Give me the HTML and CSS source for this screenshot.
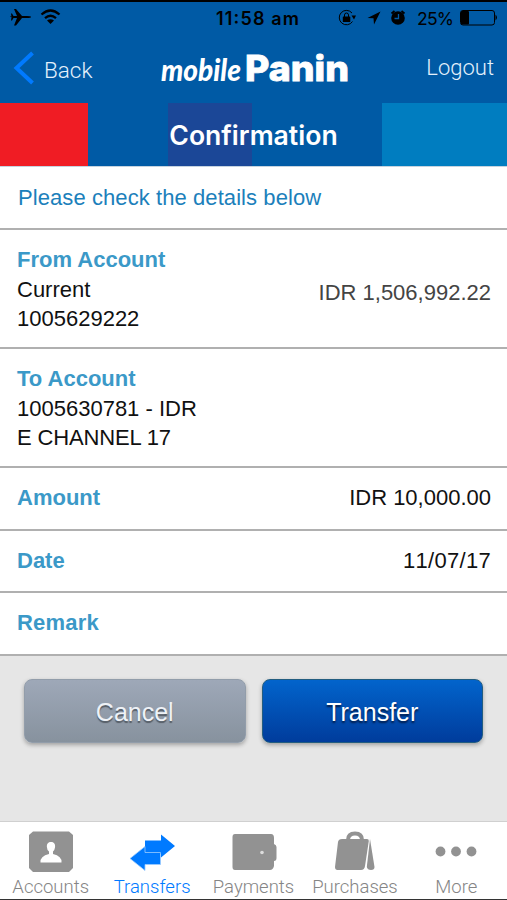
FILE: index.html
```html
<!DOCTYPE html>
<html lang="en">
<head>
  <meta charset="UTF-8">
  <meta name="viewport" content="width=device-width, initial-scale=1.0">
  <title>Mobile Panin - Confirmation</title>
  <link rel="stylesheet" href="styles.css">
</head>
<body>
  <div class="app">
    <header class="header">
      <!-- Status bar -->
      <svg class="status" width="507" height="32" viewBox="0 0 507 32">
        <path d="M10 17 Q10 16 12 16 H17 L14 9 H16 L22 16 H27 Q31 16 31 17 Q31 18 27 18 H22 L16 25.500 H14 L17 18 H13.500 L12 20.500 H11 L11.500 17 L11 13.500 H12 L13.500 16 Z"/>
        <g class="wifi">
          <path d="M41.500 14.500 Q50.500 6.500 59.500 14.500"/>
          <path d="M45 18.200 Q50.500 13.200 56 18.200"/>
        </g>
        <path d="M47 20.500 Q50.500 17.800 54 20.500 L50.500 24 Z"/>
        <text class="time" x="216" y="25" textLength="83">11:58 am</text>
        <path class="thin" d="M352 13 A7.200 7.200 0 1 0 352.500 21.500"/>
        <path d="M351.500 15.500 h4.500 l-2 4 z"/>
        <rect x="342.800" y="16.500" width="7.500" height="5.500" rx=".6"/>
        <path class="thin" d="M344.500 17 v-2 a2 2 0 0 1 4 0 v2"/>
        <path d="M367.500 18 L380.500 11.500 L374 24.500 L373.500 18.200 Z"/>
        <circle cx="398" cy="18" r="6.800"/>
        <path class="bell" d="M391.500 13.500 l3-2.500 M401.500 11 l3 2.500"/>
        <path class="hands" d="M398.500 14 v4.500 h-4"/>
        <text class="percent" x="417" y="25" textLength="37">25%</text>
        <rect class="thin" x="460.500" y="10.500" width="34" height="14.500" rx="2.500"/>
        <rect x="461" y="11" width="8" height="13.500" rx="1"/>
        <path d="M495.500 14.500 q3 3 0 6 z"/>
      </svg>
      <nav class="nav">
        <a class="back">
          <svg width="22" height="34" viewBox="0 0 22 34"><path d="M19.500 2 L3.500 17 L19.500 32"/></svg>
          <span>Back</span>
        </a>
        <svg class="logo" width="196" height="40" viewBox="0 0 196 40">
          <text class="mobile" x="3" y="30" textLength="80" lengthAdjust="spacingAndGlyphs">mobile</text>
          <text class="panin" x="87" y="30" textLength="104" lengthAdjust="spacingAndGlyphs">Panin</text>
        </svg>
        <a class="logout">Logout</a>
      </nav>
    </header>

    <h1 class="title">Confirmation</h1>

    <main>
      <p class="notice">Please check the details below</p>
      <section class="row account">
        <div>
          <h2>From Account</h2>
          <p>Current</p>
          <p>1005629222</p>
        </div>
        <span class="balance">IDR 1,506,992.22</span>
      </section>
      <section class="row account">
        <div>
          <h2>To Account</h2>
          <p>1005630781 - IDR</p>
          <p class="name">E CHANNEL 17</p>
        </div>
      </section>
      <section class="row"><h2>Amount</h2><span>IDR 10,000.00</span></section>
      <section class="row"><h2>Date</h2><span class="date">11/07/17</span></section>
      <section class="row"><h2 class="remark">Remark</h2></section>
    </main>

    <div class="actions">
      <button class="btn cancel">Cancel</button>
      <button class="btn transfer">Transfer</button>
    </div>

    <nav class="tabs">
      <a class="tab">
        <svg width="50" height="46" viewBox="0 0 50 46">
          <path d="M7 2.500 H43 L47 6 V39 L43 43 H7 L3 39 V6 Z"/>
          <path class="white" d="M25 13 c3.500 0 4.500 2.500 4 5.500 q-.3 2.500-2 4 v2.500 q9 2 8.500 8.500 H14.500 q-.5-6.500 8.500-8.500 v-2.500 q-2-1.500-2-4 c-.5-3 .5-5.500 4-5.500 z"/>
        </svg>
        <span>Accounts</span>
      </a>
      <a class="tab active">
        <svg width="50" height="46" viewBox="0 0 50 46">
          <path d="M18 11.500 H34 V5.500 L48 17 L34 28.500 V25 H18 Z"/>
          <path class="edge" d="M3 29.500 L18 17.500 V23.500 H33.500 V35.500 H18 V41.500 Z"/>
        </svg>
        <span>Transfers</span>
      </a>
      <a class="tab">
        <svg width="50" height="46" viewBox="0 0 50 46">
          <path d="M6 5 H42 Q45 5 45 9 V15 Q47.500 16 47.500 18 V29 Q47.500 32 45 32 V37 Q44 41 41 41 H6 Q3.500 41 3.500 38 V8 Q3.500 5 6 5 Z"/>
          <circle class="dot" cx="33" cy="23.500" r="1.800"/>
        </svg>
        <span>Payments</span>
      </a>
      <a class="tab">
        <svg width="50" height="46" viewBox="0 0 50 46">
          <path class="handle" d="M18 11 Q18 4.500 25 4.500 Q32 4.500 32 11"/>
          <path d="M12 10 H37 Q39 10 38.800 12 L35 37 Q34.500 41 31 41 H7.500 Q5 41 5 38 L8 13 Q8.500 10 12 10 Z"/>
          <path d="M40 10 L44.500 38 Q44.500 41 41 41 Q37.500 41 36.800 38 Z"/>
        </svg>
        <span>Purchases</span>
      </a>
      <a class="tab">
        <svg width="50" height="46" viewBox="0 0 50 46">
          <circle cx="9.500" cy="22.500" r="4.900"/>
          <circle cx="25" cy="22.500" r="4.900"/>
          <circle cx="40.500" cy="22.500" r="4.900"/>
        </svg>
        <span>More</span>
      </a>
    </nav>
  </div>
</body>
</html>
```
FILE: styles.css
```css
* {
  box-sizing: border-box;
}

body {
  margin: 0;
  font-family: "Liberation Sans", Arial, sans-serif;
  font-size: 22px;
  color: #111;
}

h1, h2, p {
  margin: 0;
}

.app {
  width: 507px;
  height: 900px;
  display: flex;
  flex-direction: column;
  background: #e6e6e6;
  border-bottom: 1px solid #333;
}

.header {
  height: 103px;
  background: #005aa5;
  border-top: 2px solid #000;
}

.status {
  display: block;
  margin-top: -2px;
}

.status text {
  font-family: Inter, sans-serif;
  font-size: 18px;
}

.status .time {
  font-weight: 600;
}

.status .percent {
  font-size: 17.500px;
}

.wifi {
  fill: none;
  stroke: #000;
  stroke-width: 2.300;
}

.thin {
  fill: none;
  stroke: #000;
  stroke-width: 1;
}

.bell {
  fill: none;
  stroke: #000;
  stroke-width: 1.800;
}

.hands {
  fill: none;
  stroke: #005aa5;
  stroke-width: 1.300;
}

.nav {
  height: 71px;
  display: flex;
  padding: 0 13px;
  color: #e4f1fc;
  font-family: Roboto, sans-serif;
  font-weight: 300;
  font-size: 22.500px;
}

.back {
  display: flex;
  width: 145px;
  padding-top: 19px;
  line-height: 38px;
}

.back svg {
  margin-right: 9px;
  fill: none;
  stroke: #007aff;
  stroke-width: 4;
}

.logo {
  margin-top: 19px;
  fill: #fff;
  overflow: visible;
}

.mobile {
  font: italic 900 30px Lato, sans-serif;
}

.panin {
  font: 800 35px Inter, sans-serif;
  stroke: #fff;
  stroke-width: .8;
}

.logout {
  flex: 1;
  padding-top: 17px;
  font-size: 22px;
  line-height: 37px;
  text-align: right;
}

.title {
  height: 63px;
  line-height: 64px;
  text-align: center;
  color: #fff;
  font-family: Inter, sans-serif;
  font-weight: 600;
  font-size: 26.600px;
  background: linear-gradient(to right, #f01c24 88px, #005aa5 88px 168px, #1b4797 168px 252px, #005aa5 252px 382px, #007dc0 382px);
}

main {
  background: #fff;
  border-top: 1px solid #c5d3df;
}

.notice {
  height: 63px;
  padding: 0 18px;
  line-height: 62px;
  color: #1b80bb;
  letter-spacing: .08px;
  border-bottom: 2px solid #b0b0b0;
}

.row {
  display: flex;
  justify-content: space-between;
  height: 62.500px;
  padding: 0 16px 0 17px;
  line-height: 60.500px;
  border-bottom: 2px solid #b0b0b0;
}

.row h2 {
  font-size: 22px;
  color: #3b99c8;
}

.account {
  height: 119px;
  padding-top: 15px;
  line-height: 28.500px;
}

.account h2 {
  line-height: 29px;
  padding-bottom: 2px;
}

.name {
  letter-spacing: -.15px;
}

.date {
  font-kerning: none;
  letter-spacing: .3px;
}

.remark {
  letter-spacing: .2px;
}

.balance {
  color: #444;
  line-height: 95px;
}

.actions {
  flex: 1;
  display: flex;
  gap: 16px;
  padding: 23px 24px 0;
}

.btn {
  width: 222px;
  height: 64px;
  padding: 4px 0 0;
  border: 1px solid #929daa;
  border-radius: 8px;
  color: #fff;
  font: 25px "Liberation Sans", Arial, sans-serif;
  box-shadow: 0 2px 4px rgba(0, 0, 0, .3);
}

.cancel {
  color: #eef2f7;
  background: linear-gradient(#9ea8b8, #87929e);
  text-shadow: 0 2px 1px #555d66;
}

.transfer {
  background: linear-gradient(#0264cc, #003c9c);
  border-color: #235d80;
  text-shadow: 0 2px 2px #001a44;
}

.tabs {
  height: 78px;
  display: flex;
  background: #fff;
  border-top: 1px solid #d0d0d0;
}

.tab {
  flex: 1;
  display: flex;
  flex-direction: column;
  align-items: center;
  padding-top: 7px;
  color: #858585;
  font-family: Roboto, sans-serif;
  font-weight: 300;
  font-size: 18.500px;
  line-height: 24px;
}

.tab svg {
  flex-shrink: 0;
  fill: #929292;
}

.tab .white {
  fill: #fff;
}

.tab .dot {
  fill: #ddd;
}

.tab .handle {
  fill: none;
  stroke: #929292;
  stroke-width: 4;
}

.active {
  color: #007aff;
}

.active svg {
  fill: #007aff;
}

.edge {
  stroke: #9bcbff;
  stroke-width: .8;
}
```
